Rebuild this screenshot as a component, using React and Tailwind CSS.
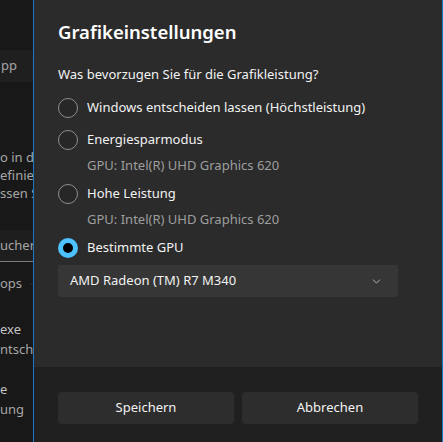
import { ChevronDown } from 'lucide-react';

const font = { fontFamily: '"Noto Sans", "Open Sans", sans-serif' };

function Radio({ checked }) {
  if (checked) {
    return (
      <span className="h-5 w-5 rounded-full bg-[#4cc2ff] flex items-center justify-center shrink-0">
        <span className="h-[10px] w-[10px] rounded-full bg-black" />
      </span>
    );
  }
  return <span className="h-5 w-5 rounded-full border border-[#8f8f8f] bg-[#272727] shrink-0" />;
}

function Option({ label, checked, className = '' }) {
  return (
    <div className={`h-8 flex items-center gap-[9px] ${className}`}>
      <Radio checked={checked} />
      <span className="text-[13px] text-[#f2f2f2]">{label}</span>
    </div>
  );
}

function Sub({ children, className = '' }) {
  return (
    <div className={`h-[19px] pl-[29px] flex items-center text-[13px] text-[#9e9e9e] ${className}`}>
      {children}
    </div>
  );
}

export default function App() {
  return (
    <div className="w-[443px] h-[442px] flex overflow-hidden bg-[#181818]" style={font}>
      {/* settings page behind the dialog */}
      <div className="w-[33px] shrink-0 overflow-hidden text-[13px] text-[#a6a6a6] whitespace-nowrap">
        <div className="h-[50px]" />
        <div className="h-8 bg-[#1f1f1f] flex items-center pl-px">pp</div>
        <div className="h-[66px]" />
        <div className="leading-[18px]">
          <div>o in d</div>
          <div>efinie</div>
          <div>ssen S</div>
        </div>
        <div className="h-[28px]" />
        <div className="h-8 bg-[#1e1e1e] border-b border-[#7a7a7a] flex items-center">ucher</div>
        <div className="h-[44px] flex items-center gap-2">ops<ChevronDown className="h-3 w-3" /></div>
        <div className="h-[13px]" />
        <div className="leading-[20px]">
          <div className="text-[#c4c4c4]">exe</div>
          <div>ntsche</div>
        </div>
        <div className="h-[20px]" />
        <div className="leading-[20px]">
          <div className="text-[#c4c4c4]">e</div>
          <div>ung</div>
        </div>
      </div>

      {/* dialog */}
      <div className="flex-1 flex flex-col border-x border-[#1a78c8] bg-[#2b2b2b]">
        <div className="h-[367px] shrink-0 px-6 pt-[18px]">
          <h1 className="text-[18.5px] leading-[28px] font-semibold text-white">Grafikeinstellungen</h1>
          <p className="mt-[18px] text-[13px] leading-[20px] text-[#f2f2f2]">
            Was bevorzugen Sie für die Grafikleistung?
          </p>
          <Option className="mt-[8px]" label="Windows entscheiden lassen (Höchstleistung)" />
          <Option label="Energiesparmodus" />
          <Sub>GPU: Intel(R) UHD Graphics 620</Sub>
          <Option className="mt-[3px]" label="Hohe Leistung" />
          <Sub>GPU: Intel(R) UHD Graphics 620</Sub>
          <Option className="mt-[3px]" label="Bestimmte GPU" checked />
          <div className="mt-px h-8 w-[340px] bg-[#363636] rounded-[3px] flex items-center justify-between pl-3 pr-[15px]">
            <span className="text-[13px] text-[#f2f2f2]">AMD Radeon (TM) R7 M340</span>
            <ChevronDown className="h-[13px] w-[13px] text-[#cfcfcf]" strokeWidth={1.5} />
          </div>
        </div>
        <div className="flex-1 bg-[#202020] px-6 pt-[25px] flex gap-2 items-start">
          <button className="flex-1 h-8 rounded-[4px] bg-[#2d2d2d] text-[13px] text-[#f2f2f2]">Speichern</button>
          <button className="flex-1 h-8 rounded-[4px] bg-[#2d2d2d] text-[13px] text-[#f2f2f2]">Abbrechen</button>
        </div>
      </div>
    </div>
  );
}
